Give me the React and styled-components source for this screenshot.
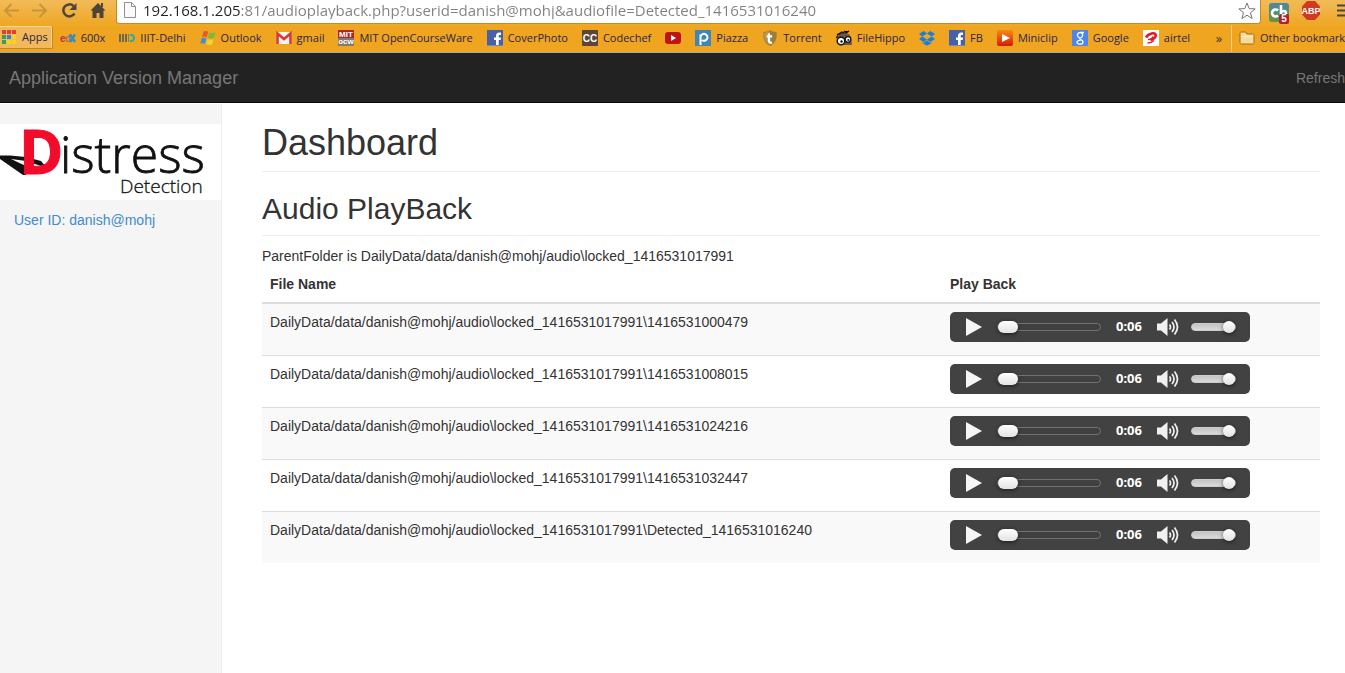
import React from "react";
import styled, { createGlobalStyle } from "styled-components";

const uiFont = `"Open Sans", "Noto Sans", sans-serif`;

const GlobalStyle = createGlobalStyle`
  * { box-sizing: border-box; }
  body {
    margin: 0;
    background: #fff;
    color: #333;
    font: 14px/20px "Liberation Sans", Arial, sans-serif;
  }
  button { font: inherit; color: inherit; border: 0; padding: 0; background: none; }
  a { text-decoration: none; }
  svg { display: block; flex: none; }
`;

const Page = styled.div`
  display: flex;
  flex-direction: column;
  min-height: 100vh;
  overflow: hidden;
`;

/* Browser chrome */
const Chrome = styled.header`
  background: linear-gradient(#f1bb5a, #efa51f 28px);
  border-bottom: 1px solid #a9a9a9;
  font-family: ${uiFont};
`;

const Toolbar = styled.div`
  display: flex;
  height: 25px;
  overflow: hidden;
`;

const NavButtons = styled.div`
  display: flex;
  gap: 13px;
  padding: 2px 10px 0 3px;
`;

const IconButton = styled.button`
  display: block;
  height: 16px;
`;

const Omnibox = styled.div`
  display: flex;
  flex: 1;
  gap: 7px;
  min-width: 0;
  height: 24px;
  padding: 2px 4px 0 7px;
  background: #fff;
  border: solid #c98a20;
  border-width: 0 1px 1px;
  border-radius: 0 0 3px 3px;
`;

const UrlInput = styled.input`
  flex: 1;
  min-width: 0;
  height: 17px;
  padding: 0;
  border: 0;
  outline: 0;
  font: 15px/17px ${uiFont};
  color: #808080;
  background: linear-gradient(90deg, #222 97px, #808080 97px);
  background-clip: text;
  -webkit-text-fill-color: transparent;
`;

const Extensions = styled.div`
  display: flex;
  gap: 12px;
  width: 84px;
  padding: 1px 0 0 8px;
  overflow: hidden;
`;

const BadgeHost = styled(IconButton)`
  position: relative;
  width: 21px;
  height: 23px;
`;

const Badge = styled.span`
  position: absolute;
  right: 0;
  bottom: 0;
  width: 10px;
  height: 10px;
  border-radius: 2px;
  background: #b3202c;
  color: #fff;
  font: bold 10px/10px "Liberation Sans", sans-serif;
`;

const BookmarkBar = styled.nav`
  display: flex;
  height: 27px;
  overflow: hidden;
`;

const AppsButton = styled.button`
  display: flex;
  align-items: center;
  gap: 6px;
  height: 23px;
  margin: 1px 7px 0 0;
  padding: 0 4px 0 2px;
  border: solid #c08728;
  border-width: 0 1px 1px 0;
  border-radius: 0 2px 2px 0;
  background: #f2b95a;
  box-shadow: inset -1px 1px 0 #f8d69a;
  font-size: 11px;
  color: #2c2450;
`;

const BookmarkList = styled.div`
  display: flex;
  flex: 1;
  gap: 14px;
  min-width: 0;
  overflow: hidden;
`;

const Bookmark = styled.a`
  display: flex;
  align-items: center;
  gap: 5px;
  flex: none;
  height: 25px;
  font-size: 11px;
  line-height: 16px;
  color: #2c2450;
  white-space: nowrap;
`;

const MoreButton = styled.button`
  width: 24px;
  height: 25px;
  font-size: 13px;
  color: #333;
`;

const OtherBookmarks = styled.div`
  width: 114px;
  padding-left: 7px;
  border-left: 1px solid #f6cf8b;
  overflow: hidden;
`;

/* Application */
const Navbar = styled.div`
  display: flex;
  align-items: center;
  justify-content: space-between;
  height: 50px;
  padding-left: 9px;
  background: #222;
  border-bottom: 1px solid #080808;
`;

const Brand = styled.a`
  font-size: 18px;
  color: #777;
`;

const NavLink = styled.a`
  color: #777;
`;

const Body = styled.div`
  display: flex;
  flex: 1;
  padding-top: 1px;
`;

const Sidebar = styled.aside`
  width: 222px;
  flex: none;
  padding-top: 20px;
  background: #f5f5f5;
  border-right: 1px solid #eee;
`;

const Logo = styled.div`
  background: #fff;
`;

const UserLink = styled.a`
  display: block;
  padding: 10px 14px;
  color: #428bca;
`;

const Main = styled.main`
  flex: 1;
  min-width: 0;
  padding: 19px 25px 40px 40px;
`;

const Heading = styled.h1`
  margin: 0 0 20px;
  padding-bottom: 9px;
  border-bottom: 1px solid #eee;
  font-size: 36px;
  font-weight: 400;
  line-height: 39px;
`;

const SubHeading = styled.h2`
  margin: 0 0 10px;
  padding-bottom: 10px;
  border-bottom: 1px solid #eee;
  font-size: 30px;
  font-weight: 400;
  line-height: 33px;
`;

const Text = styled.p`
  margin: 0;
`;

const FileTable = styled.table`
  width: 100%;
  table-layout: fixed;
  border-spacing: 0;

  th {
    padding: 8px;
    border-bottom: 2px solid #ddd;
    text-align: left;
  }
  th:last-child { width: 378px; }
  td {
    padding: 8px;
    vertical-align: top;
  }
  tbody tr:nth-child(odd) { background: #f9f9f9; }
  tbody tr + tr td { border-top: 1px solid #ddd; }
`;

const Player = styled.div`
  display: flex;
  align-items: center;
  width: 300px;
  height: 30px;
  margin-bottom: 5px;
  padding: 0 14px 0 15px;
  border-radius: 5px;
  background: #424242;
`;

const Slider = styled.input`
  appearance: none;
  flex: none;
  width: ${(p) => p.$width}px;
  height: 12px;
  margin: 0;
  background: none;

  &::-webkit-slider-runnable-track {
    height: 8px;
    border-radius: 4px;
    border: 1px solid ${(p) => (p.$filled ? "#ccc" : "#727272")};
    background: ${(p) => (p.$filled ? "linear-gradient(#c4c4c4, #dadada)" : "#404040")};
  }
  &::-webkit-slider-thumb {
    appearance: none;
    width: ${(p) => p.$thumb}px;
    height: 12px;
    margin-top: -3px;
    border-radius: 6px;
    background: linear-gradient(#fff, #e2e2e2);
    box-shadow: 0 1px 4px rgba(0, 0, 0, 0.6);
  }
`;

const Time = styled.span`
  width: 26px;
  margin: 0 15px;
  padding-bottom: 2px;
  color: #fff;
  font: bold 13px/18px "Noto Sans", sans-serif;
`;

const PlayButton = styled.button`
  margin-right: 14px;
`;

const MuteButton = styled.button`
  margin-right: 12px;
`;

const Svg = ({ w = 16, h = 16, children }) => (
  <svg width={w} height={h} viewBox={`0 0 ${w} ${h}`} aria-hidden="true">{children}</svg>
);

const Tile = ({ fill, label, size = 13, color = "#fff", x = 8, y = 13, family = "Liberation Sans" }) => (
  <Svg>
    <rect width="16" height="16" rx="1" fill={fill} />
    <text x={x} y={y} textAnchor="middle" fontFamily={family} fontWeight="bold" fontSize={size} fill={color}>{label}</text>
  </Svg>
);

const Facebook = () => (
  <Svg>
    <rect width="16" height="16" fill="#4661a8" />
    <path d="M9 16v-6H7V7.500h2V6c0-2.300 1.200-3.500 3.300-3.500H14V5h-1.200c-.9 0-1.100.4-1.100 1.200v1.300H14L13.700 10h-2v6z" fill="#fff" />
    <path d="M0 15.500h16" stroke="#6f86bd" />
  </Svg>
);

const icons = {
  edx: (
    <Svg>
      <text x="0" y="12" fontFamily="Liberation Sans" fontWeight="bold" fontSize="10" fill="#c4303c">e</text>
      <text x="5" y="12" fontFamily="Liberation Sans" fontWeight="bold" fontSize="10" fill="#a6705c">d</text>
      <path d="M10 4.500l5 7.500M15 4.500l-5 7.500" stroke="#2f8fc4" strokeWidth="2.500" />
    </Svg>
  ),
  iiit: (
    <Svg>
      <path d="M1 4v8M4 4v8M7 4v8" stroke="#6c6a4e" strokeWidth="2" />
      <path d="M9.500 4v8" stroke="#4f8f83" strokeWidth="1" />
      <path d="M11 5h1c4 0 4 6 0 6h-1" fill="none" stroke="#35a89c" strokeWidth="2" />
    </Svg>
  ),
  outlook: (
    <Svg>
      <path d="M3.500 1.500C5.300.5 6.800.8 8.200 1.800L6.700 7.300C5.200 6.400 3.700 6.300 2 7z" fill="#e8562a" />
      <path d="M9.300 2.400c2 1 4 .9 6.200-.2L14 7.700c-2 1-4 1-6.200 0z" fill="#7cb83a" />
      <path d="M1.700 8.200c1.700-.8 3.200-.6 4.700.3L4.900 14c-1.500-1-3-1.100-4.700-.4z" fill="#3f8fd8" />
      <path d="M7.500 8.900c2 1 4 1 6.200.1l-1.500 5.300c-2 1-4 1-6.200 0z" fill="#f6d02c" />
    </Svg>
  ),
  gmail: (
    <Svg>
      <rect y="2" width="16" height="12" rx="1" fill="#f6f2f0" />
      <path d="M1.500 14V3.500L8 9l6.500-5.500V14" fill="none" stroke="#d83a30" strokeWidth="2.600" />
    </Svg>
  ),
  mit: (
    <Svg>
      <rect width="16" height="8" fill="#b0252b" />
      <rect y="8" width="16" height="8" fill="#85796b" />
      <text x="8" y="7" textAnchor="middle" fontFamily="Liberation Sans" fontWeight="bold" fontSize="8" fill="#fff">MIT</text>
      <text x="8" y="14" textAnchor="middle" fontFamily="Liberation Sans" fontWeight="bold" fontSize="8" fill="#fff">ocw</text>
    </Svg>
  ),
  fb: <Facebook />,
  cc: <Tile fill="#5d4638" label="CC" size={10} y={12} />,
  youtube: (
    <Svg>
      <rect y="2" width="16" height="12" rx="3" fill="#bf1512" />
      <path d="M6 5l5 3-5 3z" fill="#fff" />
    </Svg>
  ),
  piazza: (
    <Svg>
      <rect width="16" height="16" fill="#3f86b5" />
      <path d="M5.500 15V4.500M5.500 7a3.500 3.500 0 1 1 1.500 3.200" fill="none" stroke="#fff" strokeWidth="2" />
    </Svg>
  ),
  torrent: (
    <Svg>
      <path d="M8 0l2.500 1.500L14.500 2c.8 6-.5 11-6.500 14C2 13 .7 8 1.500 2l4-.5z" fill="#9a7f3c" />
      <path d="M8 1v14C3 12 1.500 8 2.300 3z" fill="#b59a58" />
      <path d="M7 3.500V11c0 1.500 1.500 2 3 1.400M4.800 6.300h5.400" fill="none" stroke="#fff" strokeWidth="2.200" />
    </Svg>
  ),
  hippo: (
    <Svg>
      <path d="M3 3l3-1 3 1 4 1 2 3 1 8H8L2 9z" fill="#6e5546" />
      <path d="M1 5l4-2M5 2l3 1M8 1l2 2 3-2M0 8l2-2" stroke="#151515" strokeWidth="1.500" />
      <circle cx="5" cy="11" r="3.800" fill="#fff" stroke="#151515" strokeWidth="1.500" />
      <circle cx="12" cy="9.500" r="2.800" fill="#fff" stroke="#151515" strokeWidth="1.300" />
      <circle cx="5.500" cy="11.500" r="1.200" fill="#151515" />
      <circle cx="12.300" cy="10" r="1" fill="#151515" />
    </Svg>
  ),
  dropbox: (
    <Svg>
      <path d="M4.700 1L8 3.600 3.300 6.500 0 3.900zM11.300 1L16 3.900l-3.300 2.600L8 3.600zM0 9.100l3.300-2.600L8 9.400 4.700 12zM16 9.100l-3.300-2.600L8 9.400l3.300 2.600zM8 10.200l3.300 2.700 1.400-.9v1L8 15.800 3.300 13v-1l1.400.9z" fill="#157fe0" />
    </Svg>
  ),
  miniclip: (
    <Svg>
      <defs>
        <linearGradient id="mini" x2="0" y2="1"><stop stopColor="#f98a12" /><stop offset="1" stopColor="#d81806" /></linearGradient>
      </defs>
      <rect width="16" height="16" rx="2" fill="url(#mini)" />
      <path d="M5 4l8 4-8 4z" fill="#fff" />
    </Svg>
  ),
  google: (
    <Svg>
      <rect width="16" height="16" rx="1" fill="#4a86ee" />
      <path d="M12 2.500H8M9.500 3a2.600 2.600 0 1 1-4 2.300A2.500 2.500 0 0 1 9.500 3zM7.500 8.500c0 1.200 3.500 1.300 3.500 3.500 0 3-6 2.800-6 .3 0-1.500 2-2 3.500-1.800" fill="none" stroke="#fff" strokeWidth="1.300" />
    </Svg>
  ),
  airtel: (
    <Svg>
      <rect width="16" height="16" fill="#fff" />
      <path d="M3 7.500C5.500 3 12.500 2 12.700 5.200c0 2.300-2.700 4-5.200 4.800" fill="none" stroke="#dc1c2c" strokeWidth="2.600" />
      <path d="M5 9.500c2.500 0 4.500-1.500 5-3M4.500 13c2 0 5-1 6.500-2.500" fill="none" stroke="#dc1c2c" strokeWidth="1.300" />
    </Svg>
  ),
  folder: (
    <Svg>
      <path d="M1 12.500v-9C1 2.500 1.500 2 2.500 2h4L8 4h5.500c1 0 1.500.500 1.500 1.500v7c0 1-.500 1.500-1.500 1.500h-11C1.500 14 1 13.500 1 12.500z" fill="#fbd998" stroke="#9a6a24" />
      <path d="M2 6.500h12" stroke="#fff0cc" />
    </Svg>
  ),
};

const bookmarks = [
  ["edx", "600x"], ["iiit", "IIIT-Delhi"], ["outlook", "Outlook"], ["gmail", "gmail"],
  ["mit", "MIT OpenCourseWare"], ["fb", "CoverPhoto"], ["cc", "Codechef"], ["youtube", ""],
  ["piazza", "Piazza"], ["torrent", "Torrent"], ["hippo", "FileHippo"], ["dropbox", ""],
  ["fb", "FB"], ["miniclip", "Miniclip"], ["google", "Google"], ["airtel", "airtel"],
];

const appColors = ["#e0402f", "#e0402f", "#e0402f", "#2fa35a", "#3b7de0", "#f7d51c", "#2fa35a", "#f7d51c", "#f7d51c"];

const folder = "DailyData/data/danish@mohj/audio\\locked_1416531017991";
const files = ["1416531000479", "1416531008015", "1416531024216", "1416531032447", "Detected_1416531016240"];

function BrowserChrome() {
  return (
    <Chrome>
      <Toolbar>
        <NavButtons>
          <IconButton aria-label="Back">
            <Svg><path d="M8.500 2L2 8.500 8.500 15M2 8.500h14" fill="none" stroke="#c99338" strokeWidth="2" /></Svg>
          </IconButton>
          <IconButton aria-label="Forward">
            <Svg><path d="M7.500 2L14 8.500 7.500 15M14 8.500H0" fill="none" stroke="#c99338" strokeWidth="2" /></Svg>
          </IconButton>
          <IconButton aria-label="Reload">
            <Svg>
              <path d="M13.500 11.500A6 6 0 1 1 12.500 4" fill="none" stroke="#4d453a" strokeWidth="2.500" />
              <path d="M15.500 1v7h-7z" fill="#4d453a" />
            </Svg>
          </IconButton>
          <IconButton aria-label="Home">
            <Svg>
              <path d="M8 1l7.500 7.500H13.500V16H9.500v-5h-3v5H2.500V8.500H.5z" fill="#4d453a" />
              <path d="M11 1h2v4h-2z" fill="#4d453a" />
            </Svg>
          </IconButton>
        </NavButtons>
        <Omnibox>
          <Svg w={12}>
            <path d="M.5.500h7l4 4v11H.5zM7.500.500v4h4" fill="#fafafa" stroke="#909090" />
          </Svg>
          <UrlInput
            aria-label="Address"
            defaultValue="192.168.1.205:81/audioplayback.php?userid=danish@mohj&audiofile=Detected_1416531016240"
          />
          <IconButton aria-label="Bookmark this page">
            <Svg w={18} h={18}>
              <path d="M9 1l2.200 5.600 6 .3-4.700 3.800L14.100 16.500 9 13.200l-5.100 3.300 1.600-5.800L.8 6.900l6-.3z" fill="#fff" stroke="#777" />
            </Svg>
          </IconButton>
        </Omnibox>
        <Extensions>
          <BadgeHost aria-label="Extension, 5 items">
            <Svg w={20} h={19}>
              <defs>
                <linearGradient id="cb" x2="0" y2="1"><stop stopColor="#4d86a8" /><stop offset="1" stopColor="#66953a" /></linearGradient>
              </defs>
              <rect width="20" height="19" rx="3" fill="url(#cb)" />
              <path d="M9 7.500a3.500 3.500 0 1 0 0 5M12 2v12M12.500 8.500c6-2.500 6 5.500 0 4" fill="none" stroke="#fff" strokeWidth="2.600" />
            </Svg>
            <Badge>5</Badge>
          </BadgeHost>
          <IconButton aria-label="Adblock Plus">
            <Svg w={20} h={19}>
              <path d="M6 0h8l5 5.500v8L14 19H6l-5-5.500v-8z" fill="#cf3a20" />
              <text x="10" y="13" textAnchor="middle" fontFamily="Liberation Sans" fontWeight="bold" fontSize="9" fill="#fff">ABP</text>
            </Svg>
          </IconButton>
          <IconButton aria-label="Menu">
            <Svg w={16} h={18}><path d="M4 4.500h12M4 9.500h12M4 14.500h12" stroke="#4d453a" strokeWidth="2" /></Svg>
          </IconButton>
        </Extensions>
      </Toolbar>
      <BookmarkBar>
        <AppsButton>
          <Svg w={14} h={14}>
            {appColors.map((c, i) => (
              <rect key={i} x={(i % 3) * 5} y={Math.floor(i / 3) * 5} width="4" height="4" fill={c} />
            ))}
          </Svg>
          Apps
        </AppsButton>
        <BookmarkList>
          {bookmarks.map(([icon, label], i) => (
            <Bookmark key={i} href="#" aria-label={label || icon}>
              {icons[icon]}
              {label && <span>{label}</span>}
            </Bookmark>
          ))}
        </BookmarkList>
        <MoreButton aria-label="More bookmarks">»</MoreButton>
        <OtherBookmarks>
          <Bookmark href="#">
            {icons.folder}
            <span>Other bookmarks</span>
          </Bookmark>
        </OtherBookmarks>
      </BookmarkBar>
    </Chrome>
  );
}

function AudioPlayer({ name }) {
  return (
    <Player>
      <PlayButton aria-label={`Play ${name}`}>
        <Svg w={18} h={18}><path d="M1 0l16 9-16 9z" fill="#f6f6f6" /></Svg>
      </PlayButton>
      <Slider type="range" aria-label="Position" defaultValue="0" $width={104} $thumb={20} />
      <Time>0:06</Time>
      <MuteButton aria-label="Mute">
        <Svg w={22} h={18}>
          <path d="M0 5.500h4L10.500 0v18L4 12.500H0z" fill="#f0f0f0" />
          <path d="M12.500 6.500q2 2.500 0 5M15 4q4 5 0 10M17.500 1.500q6 7.500 0 15" fill="none" stroke="#f0f0f0" strokeWidth="1.700" />
        </Svg>
      </MuteButton>
      <Slider type="range" aria-label="Volume" defaultValue="100" $width={45} $thumb={12} $filled />
    </Player>
  );
}

function DistressLogo() {
  return (
    <Logo>
      <svg width="221" height="76" viewBox="0 0 221 76" overflow="visible" role="img" aria-label="Distress Detection">
        <path d="M0 31.500H10L26 33l15 4 6 7-12-4-9-3-15-2 15 7v9h-3L0 35z" fill="#111" />
        <g fontFamily="Open Sans" fill="#111" stroke="#111">
          <text x="19" y="50" fontSize="60" fontWeight="700" fill="#f30b2c" stroke="#f30b2c">D</text>
          <text x="60" y="49" fontSize="50" fontWeight="300" strokeWidth="0.8">istress</text>
          <text x="120" y="69" fontSize="19" fontWeight="300" strokeWidth="0.3">Detection</text>
        </g>
      </svg>
    </Logo>
  );
}

export default function App() {
  return (
    <Page>
      <GlobalStyle />
      <BrowserChrome />
      <Navbar>
        <Brand href="#">Application Version Manager</Brand>
        <NavLink href="#">Refresh</NavLink>
      </Navbar>
      <Body>
        <Sidebar>
          <DistressLogo />
          <UserLink href="#">User ID: danish@mohj</UserLink>
        </Sidebar>
        <Main>
          <Heading>Dashboard</Heading>
          <SubHeading>Audio PlayBack</SubHeading>
          <Text>ParentFolder is {folder}</Text>
          <FileTable>
            <thead>
              <tr>
                <th>File Name</th>
                <th>Play Back</th>
              </tr>
            </thead>
            <tbody>
              {files.map((file) => (
                <tr key={file}>
                  <td>{`${folder}\\${file}`}</td>
                  <td><AudioPlayer name={file} /></td>
                </tr>
              ))}
            </tbody>
          </FileTable>
        </Main>
      </Body>
    </Page>
  );
}
